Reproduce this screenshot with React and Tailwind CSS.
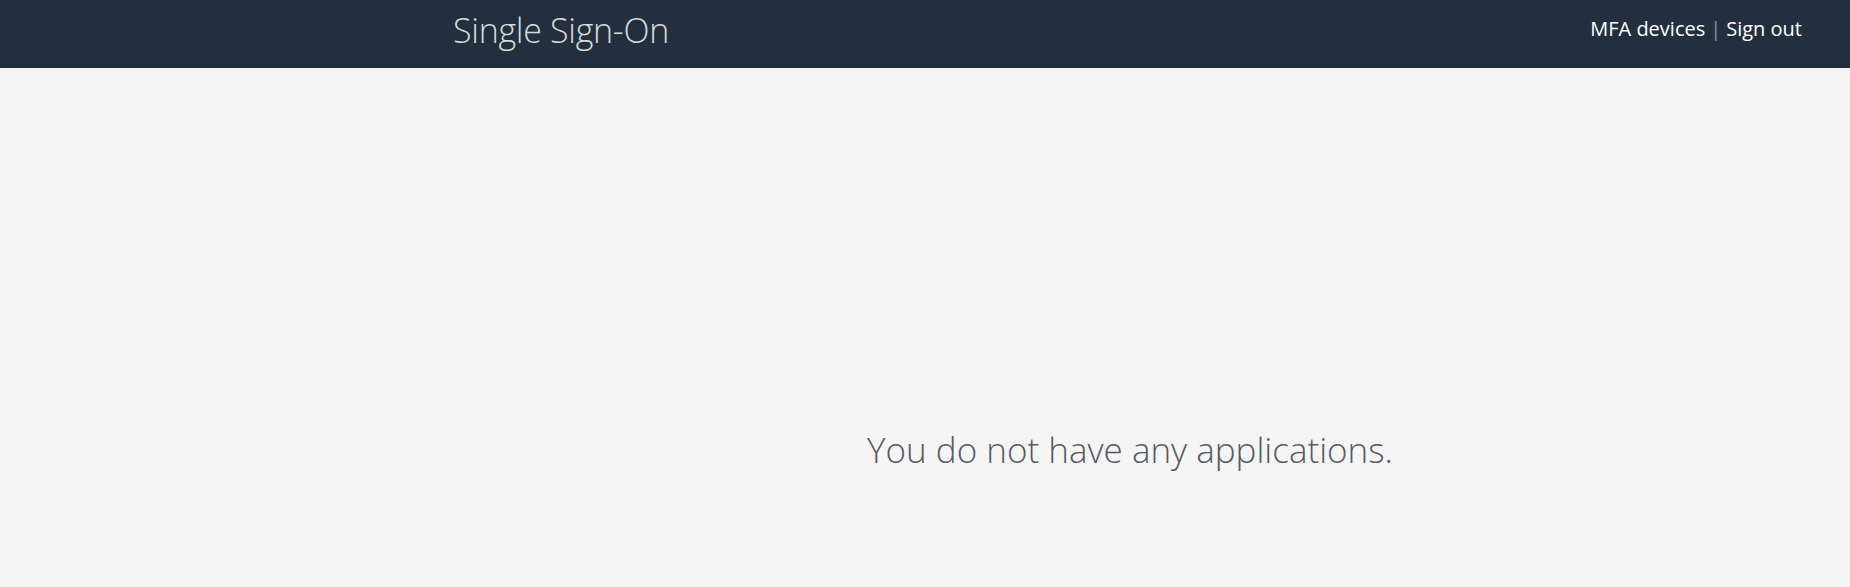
import React from "react";

export default function App() {
  return (
    <div
      className="min-h-screen flex flex-col bg-[#f5f5f5]"
      style={{ fontFamily: '"Open Sans", "Liberation Sans", sans-serif' }}
    >
      <header className="h-[68px] bg-[#232f3e] flex items-center justify-between pl-[453px] pr-[48px]">
        <h1 className="text-[34px] font-light text-[#d5dbdb] tracking-[-0.3px] leading-none -mt-[9px]">
          Single Sign-On
        </h1>
        <nav className="text-[20px] font-medium text-white flex items-center gap-[5px] -mt-[10px]">
          <a href="#" className="hover:underline">MFA devices</a>
          <span className="text-[#879196] font-normal">|</span>
          <a href="#" className="hover:underline">Sign out</a>
        </nav>
      </header>
      <main className="flex-1 flex justify-center pl-[410px] pt-[364px]">
        <p className="text-[35px] font-light text-[#545b64] leading-none">
          You do not have any applications.
        </p>
      </main>
    </div>
  );
}
